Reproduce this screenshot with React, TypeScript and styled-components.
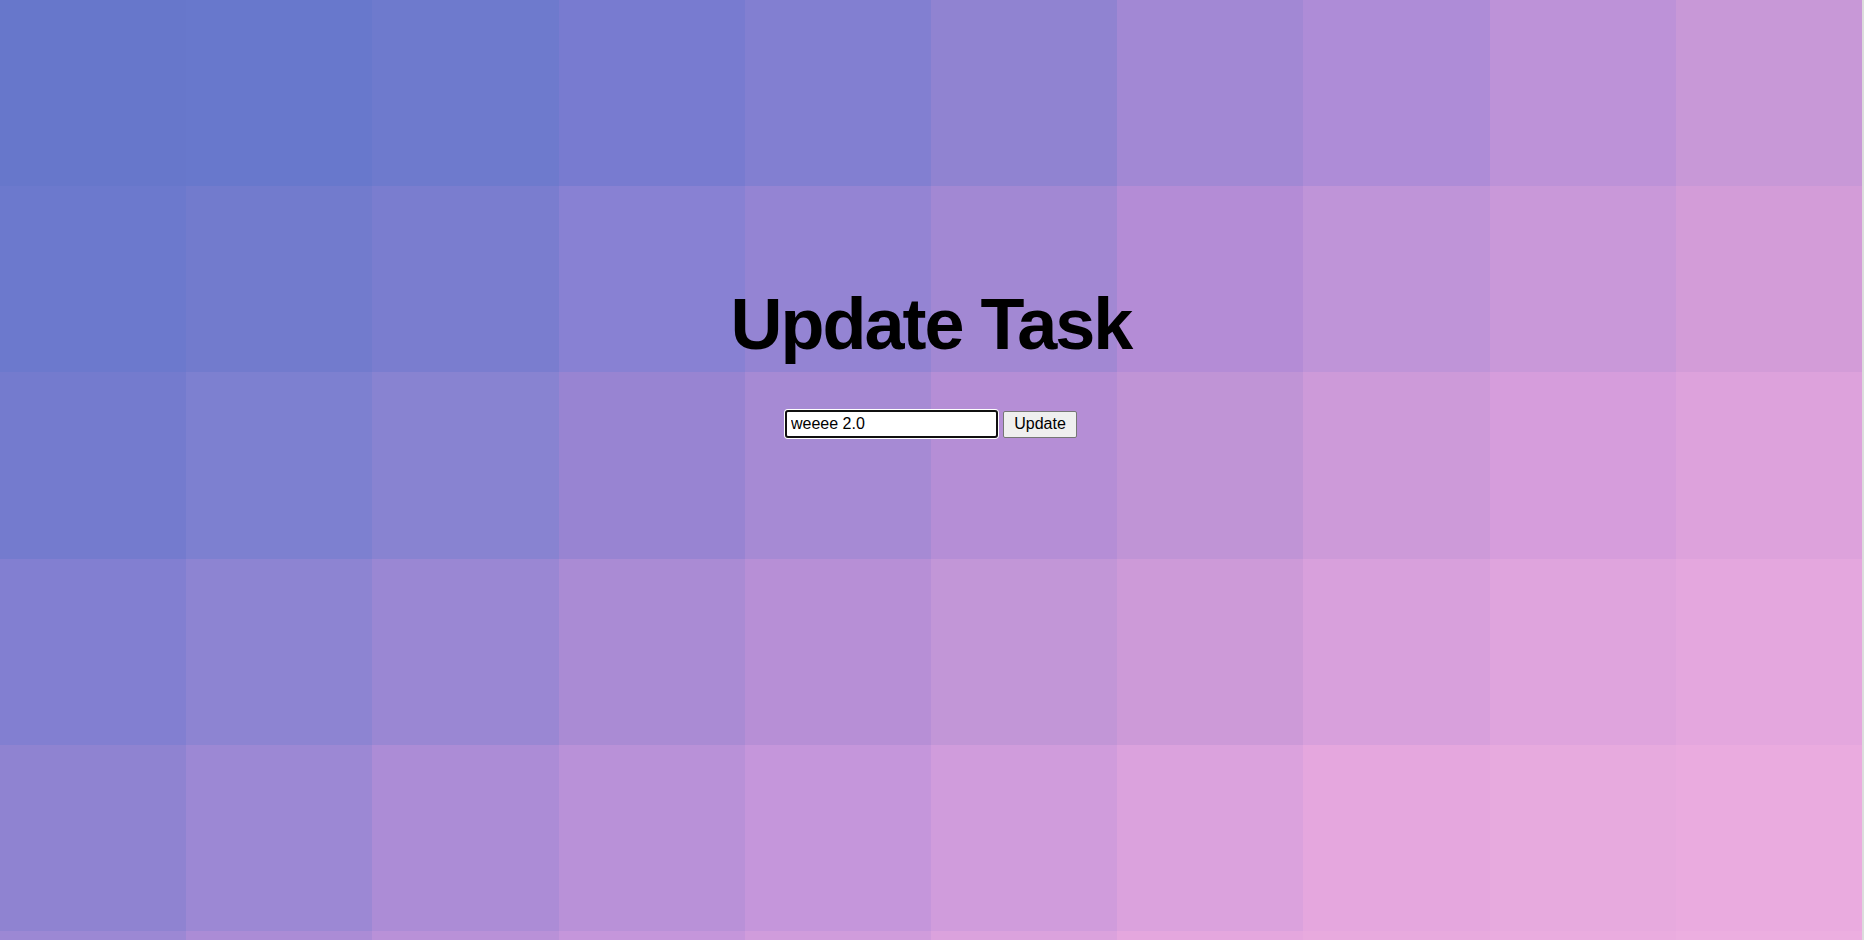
import React from "react";
import styled, { createGlobalStyle } from "styled-components";

const GlobalStyle = createGlobalStyle`
  html, body {
    margin: 0;
    padding: 0;
    height: 100%;
    overflow: hidden;
    background: #dcdcdc;
  }
  body {
    font-family: "Liberation Sans", Arial, sans-serif;
  }
`;

const TILE_COLORS: string[][] = [
  ["#6777cb", "#6878cc", "#6e7acd", "#787bd0", "#827fd1", "#9083d1", "#a288d4", "#ae8cd7", "#bd92d8", "#c898d7"],
  ["#6c79cd", "#727bcd", "#7a7dcf", "#8881d3", "#9484d3", "#a288d3", "#b48cd6", "#bf94d8", "#c998d9", "#d39cd8"],
  ["#747bce", "#7d80d0", "#8883d1", "#9884d2", "#a68ad4", "#b58ed6", "#c094d6", "#cd9ad9", "#d69ddc", "#dda2dc"],
  ["#827fd1", "#8d84d2", "#9a87d3", "#aa8bd4", "#b78fd6", "#c296d7", "#cd9ad8", "#d8a0dc", "#dfa4dd", "#e4a7de"],
  ["#8f83d1", "#9c88d4", "#ac8cd6", "#b991d8", "#c596db", "#d09cdc", "#dba2dd", "#e5a7de", "#e7aade", "#eaabdf"],
  ["#9c88d4", "#ab8cd6", "#b991d8", "#c596db", "#d09cdc", "#dba2dd", "#e5a7de", "#e8aade", "#eaacdf", "#ecaee0"],
];

const Page = styled.div`
  display: grid;
  width: 100vw;
  height: 100vh;
  overflow: hidden;
`;

const TileGrid = styled.div`
  grid-area: 1 / 1;
  display: grid;
  grid-template-columns: repeat(10, 186.2px);
  grid-auto-rows: 186.2px;
  width: 1862px;
  align-self: start;
`;

const Tile = styled.div<{ $bg: string }>`
  background: ${(p) => p.$bg};
`;

const Content = styled.main`
  grid-area: 1 / 1;
  display: flex;
  flex-direction: column;
  align-items: center;
  padding-top: 283px;
  width: 1862px;
  z-index: 1;
`;

const Title = styled.h1`
  margin: 0;
  font-family: "Liberation Sans", Arial, sans-serif;
  font-weight: 700;
  font-size: 72px;
  line-height: normal;
  letter-spacing: -2px;
  color: #000;
`;

const Form = styled.form`
  display: flex;
  align-items: center;
  gap: 5px;
  margin-top: 45px;
`;

const TextInput = styled.input`
  box-sizing: border-box;
  width: 213px;
  height: 28px;
  padding: 1px 4px;
  font-family: "Liberation Sans", Arial, sans-serif;
  font-size: 16px;
  color: #000;
  background: #fff;
  border: 2px solid #101010;
  border-radius: 3px;
  box-shadow: 0 0 0 1px #ffffff;
  outline: none;
  caret-color: #000;
`;

const Button = styled.button`
  box-sizing: border-box;
  width: 74px;
  height: 27px;
  padding: 0 6px;
  font-family: "Liberation Sans", Arial, sans-serif;
  font-size: 16px;
  color: #000;
  background: #efefef;
  border: 1px solid #767676;
  border-radius: 2px;
  cursor: pointer;
`;

export default function App() {
  const [value, setValue] = React.useState("weeee 2.0");
  return (
    <>
      <GlobalStyle />
      <Page>
        <TileGrid>
          {TILE_COLORS.flatMap((row, r) =>
            row.map((c, i) => <Tile key={`${r}-${i}`} $bg={c} />)
          )}
        </TileGrid>
        <Content>
          <Title>Update Task</Title>
          <Form onSubmit={(e) => e.preventDefault()}>
            <TextInput
              type="text"
              value={value}
              autoFocus
              spellCheck
              onChange={(e) => setValue(e.target.value)}
            />
            <Button type="submit">Update</Button>
          </Form>
        </Content>
      </Page>
    </>
  );
}
